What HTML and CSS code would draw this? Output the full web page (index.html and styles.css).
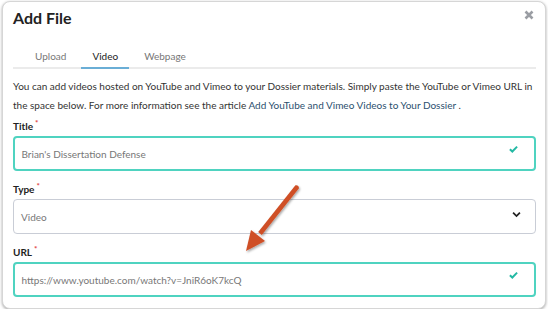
FILE: index.html
```html
<!DOCTYPE html>
<html lang="en">
<head>
  <meta charset="UTF-8" />
  <title>Add File</title>
  <link rel="stylesheet" href="styles.css">
</head>
<body>

  <div class="modal">
    <div class="modal-header">
      <h2>Add File</h2>
      <svg class="close-btn" viewBox="0 0 10 10" aria-label="Close"><path d="M1.5 1.5l7 7M8.5 1.5l-7 7"/></svg>
    </div>

    <!-- Tabs -->
    <ul class="tabs">
      <li>Upload</li>
      <li class="active">Video</li>
      <li>Webpage</li>
    </ul>

    <p class="intro">You can add videos hosted on YouTube and Vimeo to your Dossier materials. Simply paste the YouTube or Vimeo URL in the space below. For more information see the article <a href="#">Add YouTube and Vimeo Videos to Your Dossier</a> .</p>

    <div class="field">
      <label>Title<sup>*</sup></label>
      <div class="input valid">
        <span>Brian's Dissertation Defense</span>
        <svg class="check" viewBox="0 0 10 8"><path d="M1 4.2l2.7 2.6L9 1.4"/></svg>
      </div>
    </div>

    <div class="field">
      <label>Type<sup>*</sup></label>
      <div class="input">
        <span>Video</span>
        <svg class="chevron" viewBox="0 0 10 7"><path d="M1.2 1.5L5 5.2l3.8-3.7"/></svg>
      </div>
    </div>

    <div class="field">
      <label>URL<sup>*</sup></label>
      <div class="input valid">
        <span>https://www.youtube.com/watch?v=JniR6oK7kcQ</span>
        <svg class="check" viewBox="0 0 10 8"><path d="M1 4.2l2.7 2.6L9 1.4"/></svg>
      </div>
    </div>
  </div>

  <!-- Annotation arrow -->
  <svg class="annotation" viewBox="0 0 70 80" aria-hidden="true">
    <defs>
      <filter id="shadow" x="-30%" y="-30%" width="160%" height="160%">
        <feDropShadow dx="1" dy="1.5" stdDeviation="1.2" flood-color="#000" flood-opacity="0.35"/>
      </filter>
    </defs>
    <g filter="url(#shadow)" fill="#cf4f26">
      <path d="M55.8 4.4 C56.6 2.6 54 0.6 52.2 1.6 L15.2 48.1 L18.8 50.9 Z"/>
      <path d="M3 67 L8 46 L22 57 Z"/>
    </g>
  </svg>

</body>
</html>
```

FILE: styles.css
```css
body {
  font-family: Lato, 'Open Sans', sans-serif;
  margin: 0;
  background: #fff;
  color: #333;
}

.modal {
  margin: 1px 0 0 2px;
  width: 544px;
  height: 308px;
  box-sizing: border-box;
  border: 1px solid #d6d6d6;
  border-radius: 8px;
  box-shadow: 0 1px 3px rgba(0,0,0,0.35);
  padding: 0 9px 0 10px;
  background: #fff;
}

.modal-header {
  display: flex;
  justify-content: space-between;
  align-items: flex-start;
  height: 44px;
}

.modal-header h2 {
  margin: 6px 0 0 0;
  font-size: 16px;
  font-weight: 700;
  color: #222;
  line-height: 20px;
}

.close-btn {
  width: 10px;
  height: 10px;
  margin-top: 8px;
  margin-right: 2px;
  fill: none;
  stroke: #9a9da3;
  stroke-width: 2.6;
}

/* Tabs */
.tabs {
  list-style: none;
  margin: 0;
  padding: 0 0 0 11px;
  display: flex;
  gap: 4px;
  border-bottom: 2px solid #ebebeb;
}

.tabs li {
  padding: 0 11px;
  height: 21px;
  line-height: 21px;
  font-size: 10px;
  color: #777;
  margin-bottom: -2px;
  border-bottom: 2px solid transparent;
}

.tabs li.active {
  color: #222;
  border-bottom-color: #6aaed6;
}

.intro {
  margin: 8px 0 3px 0;
  font-size: 10px;
  line-height: 19px;
  color: #333;
}

.intro a {
  color: #2b4f6e;
  text-decoration: none;
}

.field {
  margin-bottom: 10px;
}

.field label {
  display: block;
  font-size: 10px;
  font-weight: 700;
  line-height: 16px;
  margin-bottom: 2px;
  color: #222;
}

.field label sup {
  color: #e2403f;
  font-size: 8px;
  margin-left: 2px;
  vertical-align: 4px;
  line-height: 0;
}

.input {
  display: flex;
  align-items: center;
  justify-content: space-between;
  height: 35px;
  box-sizing: border-box;
  border: 1.5px solid #c9cdd6;
  border-radius: 4px;
  padding: 0 16px 0 7px;
  font-size: 10px;
  color: #777;
}

.input.valid {
  border: 2px solid #4fd3c0;
  padding-left: 6.5px;
}

.check {
  width: 9px;
  height: 8px;
  margin-top: -9px;
  fill: none;
  stroke: #24b9a4;
  stroke-width: 2.2;
}

.chevron {
  width: 9px;
  height: 7px;
  margin-top: -5px;
  margin-right: -2px;
  fill: none;
  stroke: #222;
  stroke-width: 2;
}

/* Annotation arrow over the form */
.annotation {
  position: absolute;
  left: 243px;
  top: 184px;
  width: 70px;
  height: 80px;
}
```
